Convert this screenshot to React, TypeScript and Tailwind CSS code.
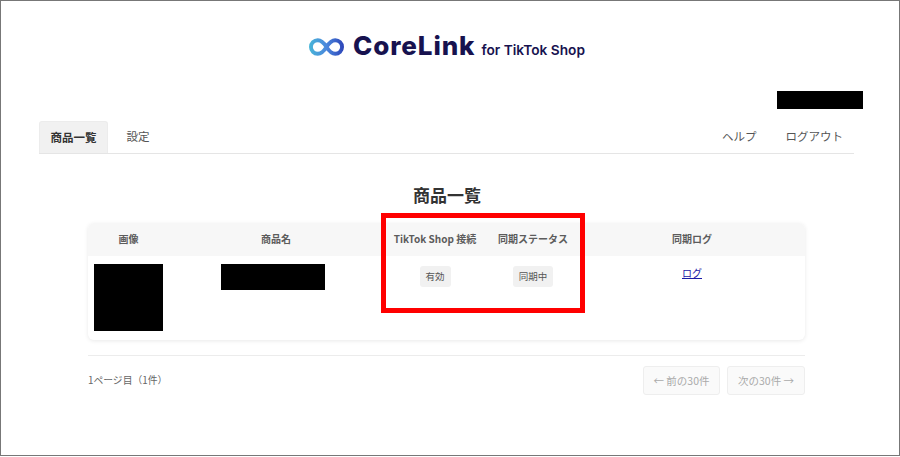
const font = { fontFamily: '"Noto Sans CJK JP", "Liberation Sans", sans-serif' };

function Logo() {
  return (
    <div className="flex items-end justify-center h-[30px] pr-[6px]">
      <svg width="35" height="20" viewBox="0 0 36 20" className="mb-[4px]" fill="none">
        <defs>
          <linearGradient id="lg" x1="0" y1="0" x2="36" y2="0" gradientUnits="userSpaceOnUse">
            <stop offset="0" stopColor="#49b6d8" />
            <stop offset="0.5" stopColor="#4a86dc" />
            <stop offset="1" stopColor="#2c44b8" />
          </linearGradient>
        </defs>
        <path
          d="M18 10C15.5 6 12.8 3 9 3A7 7 0 0 0 9 17C12.8 17 15.5 14 18 10C20.5 6 23.2 3 27 3A7 7 0 0 1 27 17C23.2 17 20.5 14 18 10Z"
          stroke="url(#lg)"
          strokeWidth="4"
        />
      </svg>
      <span className="ml-[9px] text-[26px] leading-[30px] font-extrabold tracking-[0.9px] text-[#17124f] font-['Inter']">CoreLink</span>
      <span className="ml-[6px] mb-[1px] text-[13.7px] leading-[20px] font-semibold text-[#17124f] font-['Inter']">for TikTok Shop</span>
    </div>
  );
}

function Th({ children }: { children: React.ReactNode }) {
  return <div className="flex items-center justify-center pb-[2px] text-[10px] font-bold text-[#5c5c5c]">{children}</div>;
}

export default function App() {
  return (
    <div className="bg-white h-[457px]">
      <div style={font} className="relative w-[900px] h-[456px] bg-white border border-[#777] box-border overflow-hidden">
        <div className="pt-[30px]">
          <Logo />
        </div>

        <div className="mx-[38px] mt-[30px]">
          <div className="flex justify-end">
            <div className="w-[86px] h-[18px] bg-black mr-[-2px]" />
          </div>

          <div className="mt-[12px] mr-[7px] h-[33px] flex items-stretch justify-between border-b border-[#e5e5e5] text-[11.5px] text-[#555]">
            <div className="flex items-stretch">
              <div className="w-[69px] flex items-center justify-center bg-[#f1f1f1] rounded-t-[3px] border border-b-0 border-[#ececec] font-bold text-[#333]">商品一覧</div>
              <div className="w-[60px] flex items-center justify-center">設定</div>
            </div>
            <div className="flex items-center pr-[11px]">
              <span>ヘルプ</span>
              <span className="ml-[29px]">ログアウト</span>
            </div>
          </div>

          <div className="mt-[29px] pr-[6px] text-center text-[17px] leading-[24px] font-bold text-[#333]">商品一覧</div>

          <div className="ml-[49px] mt-[16px] w-[717px]">
            <div className="rounded-[6px] bg-white shadow-[0_1px_4px_rgba(0,0,0,0.09)] overflow-hidden">
              <div className="grid grid-cols-[81px_214px_104px_92px_226px] h-[33px] bg-[#f7f7f7]">
                <Th>画像</Th>
                <Th>商品名</Th>
                <Th>TikTok Shop 接続</Th>
                <Th>同期ステータス</Th>
                <Th>同期ログ</Th>
              </div>
              <div className="grid grid-cols-[81px_214px_104px_92px_226px] h-[84px] pt-[8px] items-start">
                <div className="pl-[6px]">
                  <div className="w-[69px] h-[67px] bg-black" />
                </div>
                <div className="pl-[52px]">
                  <div className="w-[104px] h-[26px] bg-black" />
                </div>
                <div className="flex justify-center pt-[2px]">
                  <span className="h-[21px] w-[31px] flex items-center justify-center rounded-[3px] bg-[#f1f1f1] text-[9.5px] text-[#555]">有効</span>
                </div>
                <div className="flex justify-center pt-[2px]">
                  <span className="h-[21px] w-[40px] flex items-center justify-center rounded-[3px] bg-[#f1f1f1] text-[9.5px] text-[#555]">同期中</span>
                </div>
                <div className="flex justify-center">
                  <a className="text-[10px] leading-[18px] text-[#1a1aa6] underline">ログ</a>
                </div>
              </div>
            </div>

            <div className="mt-[15px] border-t border-[#ececec] pt-[10px] flex items-center justify-between">
              <span className="text-[9.8px] text-[#666]">1ページ目（1件）</span>
              <div className="flex gap-[7px]">
                <span className="w-[77px] h-[29px] flex items-center justify-center rounded-[3px] border border-[#eeeeee] bg-[#fafafa] text-[10.5px] text-[#aaa]">← 前の30件</span>
                <span className="w-[78px] h-[29px] flex items-center justify-center rounded-[3px] border border-[#eeeeee] bg-[#fafafa] text-[10.5px] text-[#aaa]">次の30件 →</span>
              </div>
            </div>
          </div>
        </div>

        <div className="absolute left-[380px] top-[212px] w-[204px] h-[100px] border-[5px] border-[#ff0000]" />
      </div>
    </div>
  );
}
